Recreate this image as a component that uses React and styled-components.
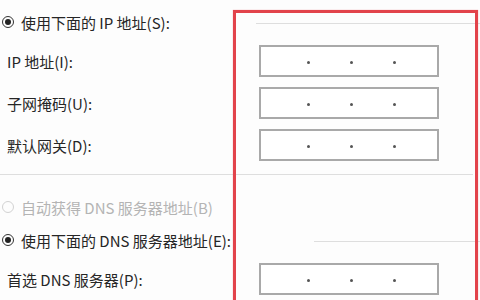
import React from "react";
import styled, { createGlobalStyle } from "styled-components";

const Global = createGlobalStyle`
  html, body { margin: 0; padding: 0; background: #fdfdfd; }
  body { width: 480px; height: 300px; overflow: hidden; }
`;

const Page = styled.div`
  position: relative;
  width: 480px;
  height: 300px;
  overflow: hidden;
  font-family: "Noto Sans CJK SC", "Microsoft YaHei", sans-serif;
  font-size: 15px;
  color: #262626;
  display: flex;
  flex-direction: column;
  padding-top: 12px;
  box-sizing: border-box;
`;

const RadioRow = styled.div`
  display: flex;
  align-items: center;
  height: ${(p) => p.$h || 20}px;
  margin-top: ${(p) => p.$mt || 0}px;
  padding-left: 2px;
  color: ${(p) => (p.$disabled ? "#b4b4b4" : "#262626")};
  white-space: nowrap;
`;

const Radio = styled.span`
  width: 12px;
  height: 12px;
  border-radius: 50%;
  box-sizing: border-box;
  border: 1.5px solid ${(p) => (p.$disabled ? "#d2d2d2" : "#333")};
  display: flex;
  align-items: center;
  justify-content: center;
  margin-right: 7px;
  flex: none;
  &::after {
    content: "";
    display: ${(p) => (p.$checked ? "block" : "none")};
    width: 6px;
    height: 6px;
    border-radius: 50%;
    background: #222;
  }
`;

const Rule = styled.div`
  height: 0;
  border-top: 1px solid #dedede;
  margin-left: ${(p) => p.$from}px;
  width: ${(p) => 473 - p.$from}px;
  flex: none;
`;

const InlineRule = styled(Rule)`
  position: relative;
  top: 1px;
  margin-left: 0;
`;

const Fields = styled.div`
  display: flex;
  flex-direction: column;
  gap: 10px;
  margin-top: ${(p) => p.$mt || 0}px;
`;

const FieldRow = styled.div`
  display: grid;
  grid-template-columns: 259px 180px;
  align-items: center;
  height: 32px;
`;

const Label = styled.span`
  padding-left: 7px;
  white-space: nowrap;
`;

const IpBox = styled.div`
  height: 32px;
  box-sizing: border-box;
  border: 2px solid #a9a9a9;
  background: #fff;
  display: flex;
  align-items: center;
  padding-left: 46px;
  gap: 40px;
  padding-top: 3px;
`;

const Dot = styled.span`
  width: 3px;
  height: 3px;
  border-radius: 50%;
  background: #555;
`;

const Divider = styled(Rule)`
  margin-top: ${(p) => p.$mt || 0}px;
`;

const Highlight = styled.div`
  position: absolute;
  left: 233px;
  top: 10px;
  width: 245px;
  height: 320px;
  box-sizing: border-box;
  border: 3px solid #e2434b;
  box-shadow: 0 0 1px rgba(226, 67, 75, 0.5);
  pointer-events: none;
`;

const Spacer = styled.span`
  flex: 1;
`;

function IpField({ label }) {
  return (
    <FieldRow>
      <Label>{label}</Label>
      <IpBox>
        <Dot />
        <Dot />
        <Dot />
      </IpBox>
    </FieldRow>
  );
}

export default function App() {
  return (
    <Page>
      <Global />
      <RadioRow $h={20}>
        <Radio $checked />
        <span>使用下面的 IP 地址(S):</span>
        <Spacer />
        <InlineRule $from={249} />
      </RadioRow>
      <Fields $mt={13}>
        <IpField label="IP 地址(I):" />
        <IpField label="子网掩码(U):" />
        <IpField label="默认网关(D):" />
      </Fields>
      <Divider $from={0} $mt={13} />
      <RadioRow $h={24} $mt={20} $disabled>
        <Radio $disabled />
        <span>自动获得 DNS 服务器地址(B)</span>
      </RadioRow>
      <RadioRow $h={24} $mt={9}>
        <Radio $checked />
        <span>使用下面的 DNS 服务器地址(E):</span>
        <Spacer />
        <InlineRule $from={307} />
      </RadioRow>
      <Fields $mt={11}>
        <IpField label="首选 DNS 服务器(P):" />
      </Fields>
      <Highlight />
    </Page>
  );
}
